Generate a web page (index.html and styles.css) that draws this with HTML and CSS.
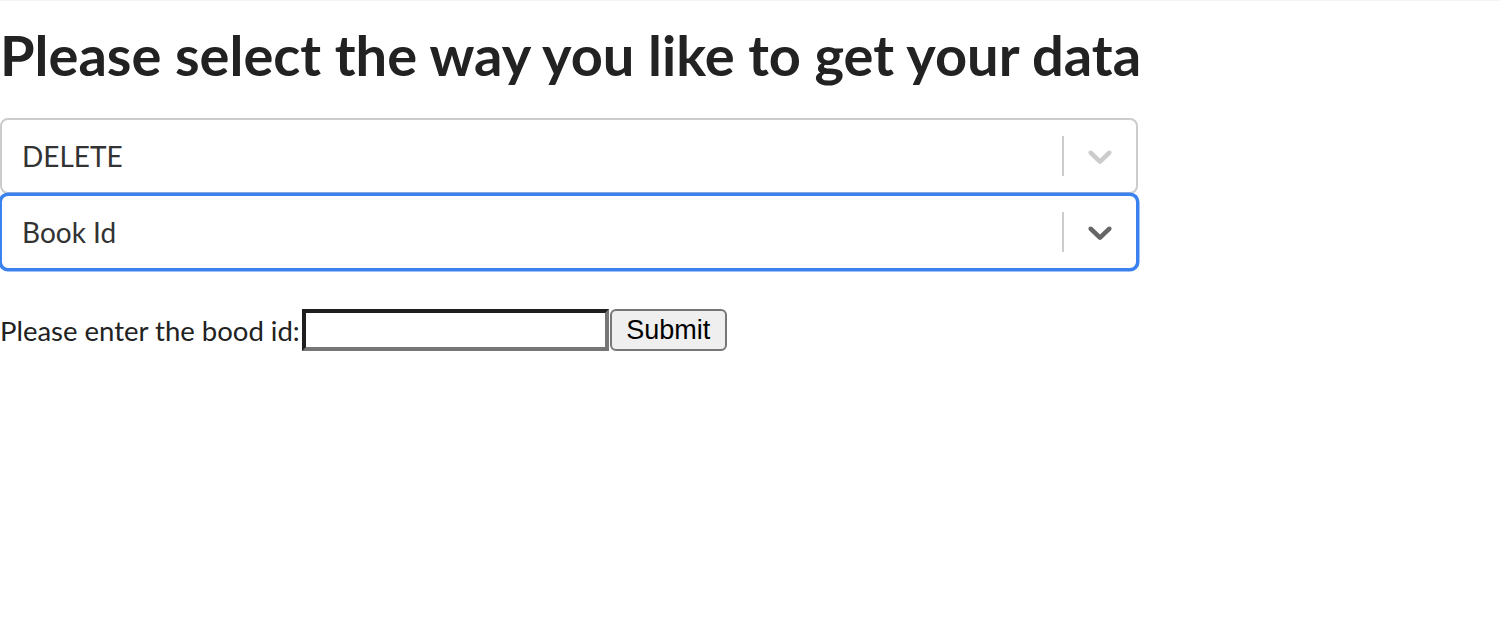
FILE: index.html
```html
<!DOCTYPE html>
<html lang="en">
<head>
<meta charset="utf-8">
<title>Select data</title>
<link rel="stylesheet" href="styles.css">
</head>
<body>
<div class="topline"></div>
<main class="page">
  <h1 class="title">Please select the way you like to get your data</h1>
  <div class="select">
    <div class="control">
      <div class="value">DELETE</div>
      <span class="separator"></span>
      <div class="indicator">
        <svg viewBox="0 0 20 20" width="40" height="40" aria-hidden="true"><path d="M4.516 7.548c0.436-0.446 1.043-0.481 1.576 0l3.908 3.747 3.908-3.747c0.533-0.481 1.141-0.446 1.574 0 0.436 0.445 0.408 1.197 0 1.615-0.406 0.418-4.695 4.502-4.695 4.502-0.217 0.223-0.502 0.335-0.787 0.335s-0.57-0.112-0.789-0.335c0 0-4.287-4.084-4.695-4.502s-0.436-1.170 0-1.615z"/></svg>
      </div>
    </div>
  </div>
  <div class="select">
    <div class="control focused">
      <div class="value">Book Id</div>
      <span class="separator"></span>
      <div class="indicator">
        <svg viewBox="0 0 20 20" width="40" height="40" aria-hidden="true"><path d="M4.516 7.548c0.436-0.446 1.043-0.481 1.576 0l3.908 3.747 3.908-3.747c0.533-0.481 1.141-0.446 1.574 0 0.436 0.445 0.408 1.197 0 1.615-0.406 0.418-4.695 4.502-4.695 4.502-0.217 0.223-0.502 0.335-0.787 0.335s-0.57-0.112-0.789-0.335c0 0-4.287-4.084-4.695-4.502s-0.436-1.170 0-1.615z"/></svg>
      </div>
    </div>
  </div>
  <form class="form"><label class="label">Please enter the bood id:</label><input class="input" type="text"><button class="btn" type="button">Submit</button></form>
</main>
</body>
</html>
```

FILE: styles.css
```css
html, body {
  margin: 0;
  padding: 0;
  background: #fff;
}
body {
  font-family: Lato, "Open Sans", sans-serif;
  color: #222;
}
.topline {
  height: 1px;
  background: #f3f3f3;
}
.page {
  width: 1138px;
}
.title {
  margin: 20px 0 30px;
  font-size: 56px;
  font-weight: 700;
  line-height: 67px;
  white-space: nowrap;
  color: #222;
}
.select {
  height: 76px;
}
.control {
  box-sizing: border-box;
  height: 76px;
  display: flex;
  align-items: center;
  border: 2px solid #ccc;
  border-radius: 8px;
  background: #fff;
}
.control.focused {
  border-color: #3b82f0;
  box-shadow: 0 0 0 1.5px #3b82f0;
}
.value {
  flex: 1;
  padding: 4px 16px;
  margin-left: 4px;
  font-size: 28px;
  color: #333;
}
.separator {
  align-self: stretch;
  width: 2px;
  margin: 16px 0;
  background: #ccc;
}
.indicator {
  display: flex;
  padding: 16px;
}
.indicator svg {
  fill: #ccc;
  display: block;
}
.focused .indicator svg {
  fill: #666;
}
.form {
  margin-top: 39px;
  display: flex;
  align-items: center;
  font-size: 27.5px;
}
.label {
  color: #222;
  padding-right: 2px;
}
.input {
  box-sizing: border-box;
  width: 307px;
  height: 42px;
  margin: 0;
  padding: 2px 4px;
  border-width: 4px;
  border-style: solid;
  border-color: #1f1f1f #767676 #767676 #1f1f1f;
  font: 26.67px Arial, "Liberation Sans", sans-serif;
  background: #fff;
}
.btn {
  box-sizing: border-box;
  width: 117px;
  height: 42px;
  margin: 0 0 0 1px;
  padding: 0;
  border: 2px solid #767676;
  border-radius: 6px;
  background: #efefef;
  color: #000;
  font: 27px Arial, "Liberation Sans", sans-serif;
}
```
